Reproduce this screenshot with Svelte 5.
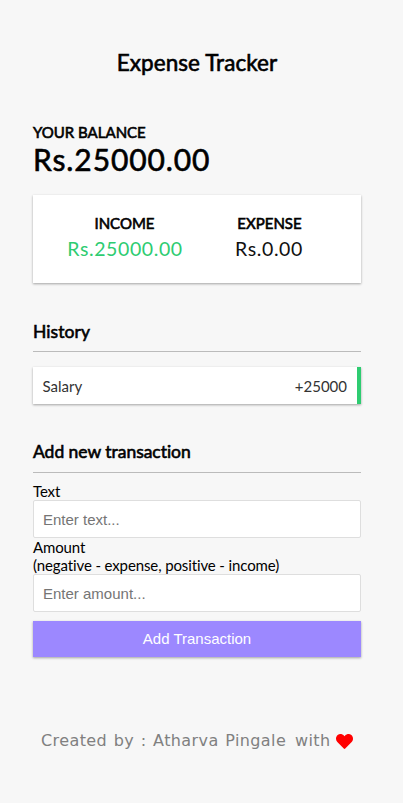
<script>
  let balance = $state('Rs.25000.00');
  let income = $state('Rs.25000.00');
  let expense = $state('Rs.0.00');
  let transactions = $state([{ text: 'Salary', amount: 25000 }]);
</script>

<main>
  <h2>Expense Tracker</h2>
  <div class="container">
    <h4>Your Balance</h4>
    <h1>{balance}</h1>
    <div class="totals">
      <div><h4>Income</h4><p class="plus">{income}</p></div>
      <div><h4>Expense</h4><p>{expense}</p></div>
    </div>
    <h3>History</h3>
    <ul>
      {#each transactions as t}
        <li>{t.text}<span>+{t.amount}</span></li>
      {/each}
    </ul>
    <h3 class="add">Add new transaction</h3>
    <form>
      <label for="text">Text</label>
      <input id="text" type="text" placeholder="Enter text..." />
      <label for="amount">Amount<br />(negative - expense, positive - income)</label>
      <input id="amount" type="number" placeholder="Enter amount..." />
      <button type="button">Add Transaction</button>
    </form>
  </div>
  <footer>
    <span class="credit">Created by : Atharva Pingale</span><span class="with">with</span>
    <svg viewBox="0 0 512 512" aria-hidden="true"><path fill="red" d="M462.3 62.6C407.5 15.9 326 24.3 275.7 76.2L256 96.5l-19.7-20.3C186.1 24.3 104.5 15.9 49.7 62.6c-62.8 53.6-66.1 149.8-9.9 207.9l193.5 199.8c12.5 12.9 32.8 12.9 45.3 0l193.5-199.8c56.3-58.1 53-154.3-9.8-207.9z"/></svg>
  </footer>
</main>

<style>
  :global(body) { margin: 0; background: #f7f7f7; }
  * { box-sizing: border-box; }
  main { height: 803px; overflow: hidden; font: 15px/18px Lato, sans-serif; font-variant-ligatures: none; color: #000; }
  h1, h2, h3, h4, p, ul { margin: 0; }
  h1, h2, h3, h4 { font-weight: 400; -webkit-text-stroke: 0.6px #000; }
  h2 { padding: 49px 9px 0 0; height: 123px; text-align: center; font-size: 22.5px; line-height: 28px; letter-spacing: .07px; }
  .container { width: 328px; margin: 0 0 0 33px; }
  h4 { font-size: 15px; line-height: 18px; text-transform: uppercase; }
  h1 { font-size: 30px; line-height: 36px; letter-spacing: .9px; }
  .totals { display: flex; margin-top: 18px; height: 88px; padding: 19px 20px; background: #fff; box-shadow: 0 1px 3px rgba(0,0,0,.12), 0 1px 2px rgba(0,0,0,.24); }
  .totals > div { flex: 1; text-align: center; }
  .totals h4 { padding-right: 1px; }
  .totals div + div h4 { padding: 0 0 0 1px; }
  p { margin-top: 5px; font-size: 19.5px; line-height: 24px; letter-spacing: .6px; color: #111; }
  .plus { color: #2ecc71; }
  h3 { margin-top: 38px; height: 31px; font-size: 17.5px; line-height: 21px; letter-spacing: .06px; border-bottom: 1px solid #bbb; }
  ul { list-style: none; padding: 0; margin: 15px 0 37px; }
  .add { margin-top: 37px; height: 32px; letter-spacing: -.03px; }
  li { display: flex; justify-content: space-between; padding: 10px 10px 9px 9.5px; height: 37px; color: #333; background: #fff; border-right: 4px solid #2ecc71; box-shadow: 0 1px 3px rgba(0,0,0,.12), 0 1px 2px rgba(0,0,0,.24); }
  form { margin-top: 9px; }
  label { display: block; letter-spacing: -0.12px; }
  input { display: block; width: 100%; height: 38px; padding: 9px; border: 1px solid #dedede; border-radius: 2px; background: #fff; font: 15px "Liberation Sans", sans-serif; }
  button { width: 100%; height: 36px; margin-top: 9px; padding: 0 6px 1px; border: 0; color: #fff; background: #9c88ff; font: 15px "Liberation Sans", sans-serif; box-shadow: 0 1px 3px rgba(0,0,0,.12), 0 1px 2px rgba(0,0,0,.24); }
  footer { display: flex; align-items: center; margin: 72px 0 0 41px; height: 24px; color: gray; font: 16px/24px "DejaVu Sans", sans-serif; }
  .credit { width: 245px; letter-spacing: .4px; word-spacing: 1.1px; white-space: nowrap; }
  .with { margin-left: 9px; letter-spacing: .4px; }
  svg { width: 17px; height: 17px; margin-left: 5px; }
</style>
